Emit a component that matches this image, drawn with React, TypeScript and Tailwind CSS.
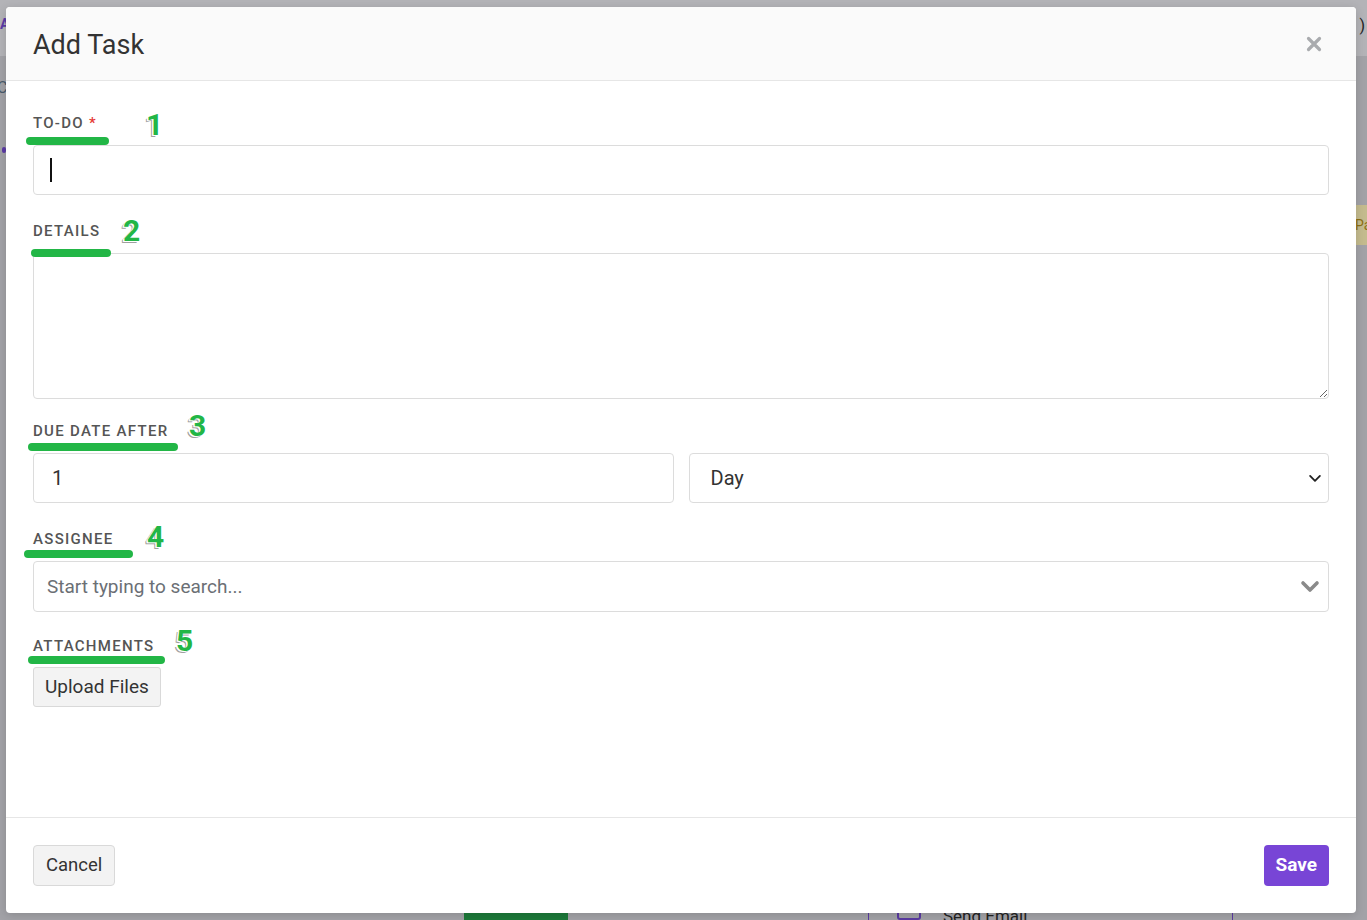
import { useState } from "react";

const FONT = "font-['Roboto','Liberation_Sans',sans-serif]";

// Highlight marks laid over the form labels
const MARKS = [
  { n: "1", bar: "left-[26px] top-[137px] w-[83px]", num: "left-[146px] top-[110px]" },
  { n: "2", bar: "left-[31px] top-[249px] w-[80px]", num: "left-[123px] top-[216px]" },
  { n: "3", bar: "left-[28px] top-[443px] w-[150px]", num: "left-[189px] top-[411px]" },
  { n: "4", bar: "left-[24px] top-[550px] w-[109px]", num: "left-[147px] top-[522px]" },
  { n: "5", bar: "left-[28px] top-[656px] w-[137px]", num: "left-[176px] top-[626px]" },
];

function Label({ children, required }: { children: string; required?: boolean }) {
  return (
    <label className="mb-[12px] block h-[20px] text-[15px] font-medium uppercase leading-[20px] tracking-[1.3px] text-[#555]">
      {children}
      {required && <span className="ml-[5px] text-[#e53935]">*</span>}
    </label>
  );
}

function CloseIcon() {
  return (
    <svg width="16" height="16" viewBox="0 0 16 16" fill="none">
      <path d="M2.5 2.5 13.5 13.5M13.5 2.5 2.5 13.5" stroke="#a9abae" strokeWidth="3.2" strokeLinecap="round" />
    </svg>
  );
}

function Chevron({ size, color, width }: { size: number; color: string; width: number }) {
  return (
    <svg width={size} height={size} viewBox="0 0 20 20" fill="none">
      <path d="M3 7l7 7 7-7" stroke={color} strokeWidth={width} strokeLinecap="round" strokeLinejoin="round" />
    </svg>
  );
}

export default function App() {
  const [todo, setTodo] = useState("");
  const [details, setDetails] = useState("");
  const [due, setDue] = useState("1");
  const [unit, setUnit] = useState("Day");

  return (
    <div className={`relative h-[920px] w-full overflow-hidden bg-[#a2a2a7] ${FONT}`}>
      {/* dimmed page behind the dialog */}
      <div className="absolute left-0 top-0 h-[56px] w-full bg-[#b3b3b7]" />
      <div className="absolute left-0 top-[14px] text-[14px] font-bold text-[#5b3aa6]">A</div>
      <div className="absolute left-[-3px] top-[76px] text-[16px] text-[#4a5a6a]">C</div>
      <div className="absolute left-[2px] top-[147px] h-[6px] w-[4px] rounded-full bg-[#5b3aa6]" />
      <div className="absolute right-[2px] top-[14px] text-[16px] text-[#222]">)</div>
      <div className="absolute right-0 top-[205px] h-[40px] w-[14px] bg-[#c4bb8e] pl-[2px] pt-[10px] text-[14px] text-[#8d6f12]">Pa</div>
      <div className="absolute left-[464px] top-[898px] h-[30px] w-[104px] bg-[#1d7a3a]" />
      <div className="absolute left-[868px] top-[880px] h-[50px] w-[365px] border-x border-[#5a3aa2]">
        <div className="absolute left-[28px] top-[24px] h-[16px] w-[24px] rounded-[3px] border-2 border-[#5a3aa2]" />
        <div className="absolute left-[74px] top-[24px] text-[17px] text-[#222]">Send Email</div>
      </div>

      {/* dialog */}
      <div className="absolute left-[6px] top-[7px] flex h-[906px] w-[1350px] flex-col overflow-hidden rounded-[4px] bg-white shadow-[0_2px_10px_rgba(0,0,0,0.15)]">
        <div className="flex h-[74px] shrink-0 items-center justify-between border-b border-[#e6e6e6] bg-[#fafafa] pl-[27px] pr-[32px]">
          <h2 className="mt-[3px] text-[27px] font-normal text-[#333]">Add Task</h2>
          <button className="flex h-[20px] w-[20px] items-center justify-center" type="button">
            <CloseIcon />
          </button>
        </div>

        <div className="flex flex-1 flex-col gap-[26px] px-[27px] pt-[32px]">
          <div>
            <Label required>To-do</Label>
            <div className="relative">
              <input
                className="h-[50px] w-full rounded-[4px] border border-[#dcdcdc] px-[16px] text-[20px] text-[#333] outline-none"
                onChange={(e) => setTodo(e.target.value)}
                value={todo}
              />
              <span className="pointer-events-none absolute left-[17px] top-[13px] h-[24px] w-[2px] bg-[#111]" />
            </div>
          </div>

          <div>
            <Label>Details</Label>
            <textarea
              className="block h-[146px] w-full resize-y rounded-[4px] border border-[#dcdcdc] px-[16px] py-[10px] text-[18px] text-[#333] outline-none"
              onChange={(e) => setDetails(e.target.value)}
              value={details}
            />
          </div>

          <div className="-mt-[4px]">
            <Label>Due date after</Label>
            <div className="grid grid-cols-2 gap-[15px]">
              <input
                className="h-[50px] w-full rounded-[4px] border border-[#dcdcdc] px-[18px] text-[20px] text-[#333] outline-none"
                onChange={(e) => setDue(e.target.value)}
                value={due}
              />
              <div className="relative">
                <select
                  className="h-[50px] w-full appearance-none rounded-[4px] border border-[#dcdcdc] bg-white px-[21px] text-[20px] text-[#333] outline-none"
                  onChange={(e) => setUnit(e.target.value)}
                  value={unit}
                >
                  <option>Day</option>
                  <option>Week</option>
                  <option>Month</option>
                </select>
                <span className="pointer-events-none absolute right-[7px] top-[18px]">
                  <Chevron color="#222" size={14} width={2.6} />
                </span>
              </div>
            </div>
          </div>

          <div>
            <Label>Assignee</Label>
            <div className="relative">
              <input
                className="h-[51px] w-full rounded-[4px] border border-[#dcdcdc] px-[13px] text-[19px] text-[#333] outline-none placeholder:text-[#6b6f75]"
                placeholder="Start typing to search..."
              />
              <span className="pointer-events-none absolute right-[9px] top-[15px]">
                <Chevron color="#8a8a8a" size={20} width={3.6} />
              </span>
            </div>
          </div>

          <div className="-mt-[2px]">
            <Label>Attachments</Label>
            <button
              className="-mt-[1px] h-[40px] rounded-[3px] border border-[#d9d9d9] bg-[#f3f3f3] px-[11px] text-[19px] text-[#333]"
              type="button"
            >
              Upload Files
            </button>
          </div>
        </div>

        <div className="flex h-[96px] shrink-0 items-start justify-between border-t border-[#e6e6e6] px-[27px] pt-[27px]">
          <button
            className="h-[41px] rounded-[4px] border border-[#d9d9d9] bg-[#f3f3f3] px-[12px] text-[18.5px] text-[#333]"
            type="button"
          >
            Cancel
          </button>
          <button className="h-[41px] rounded-[4px] bg-[#7845d6] px-[12px] text-[19px] font-bold text-white" type="button">
            Save
          </button>
        </div>
      </div>

      {MARKS.map((m) => (
        <div key={m.n}>
          <div className={`absolute h-[8px] rounded-full bg-[#22b646] ${m.bar}`} />
          <div
            className={`absolute text-[30px] font-bold leading-none text-[#22b646] [text-shadow:-1.5px_1px_0_#fff,-2.5px_2px_0_#a0a0a0] ${m.num}`}
          >
            {m.n}
          </div>
        </div>
      ))}
    </div>
  );
}
